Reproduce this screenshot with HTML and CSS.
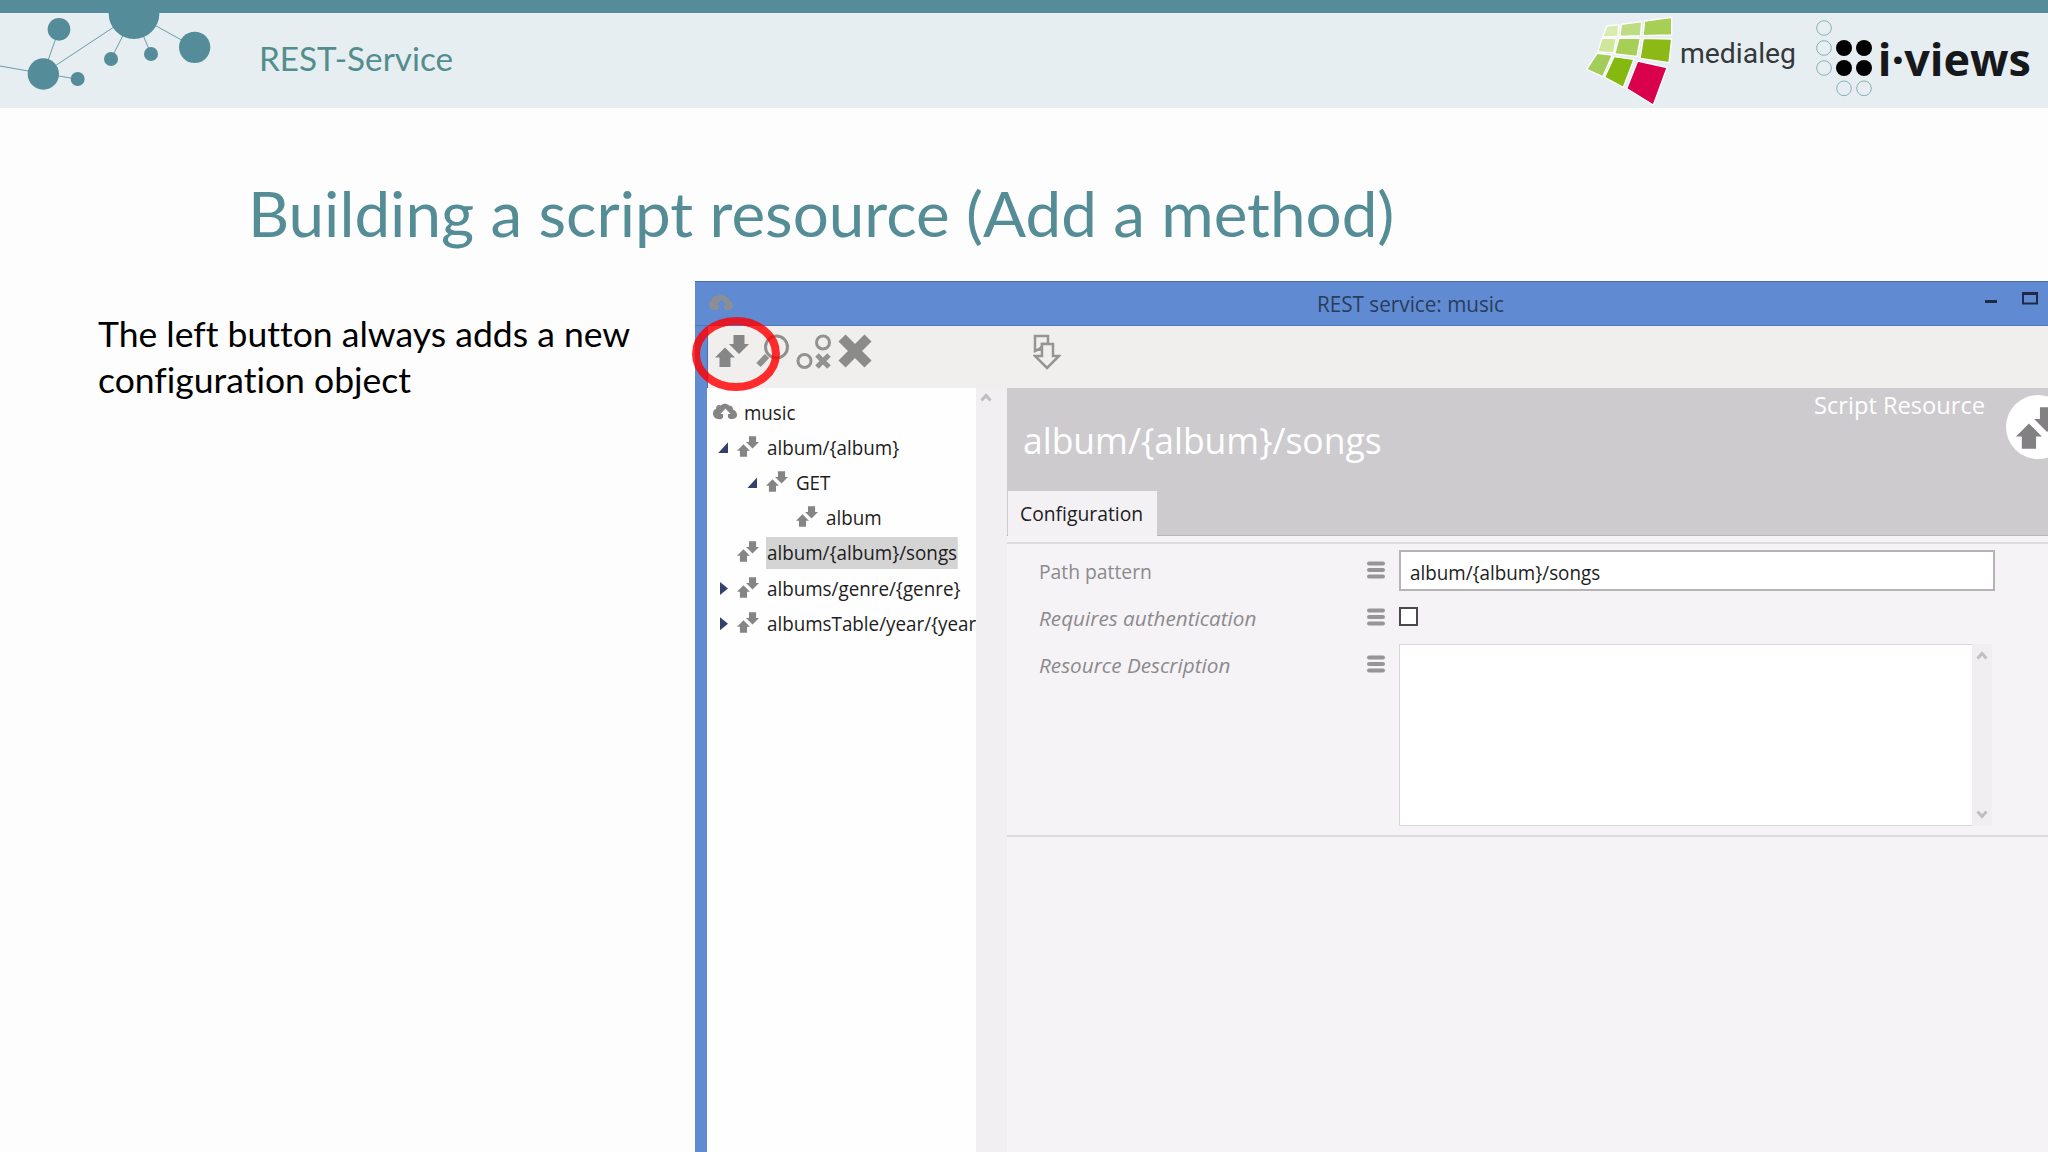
FILE: index.html
```html
<!DOCTYPE html>
<html lang="en">
<head>
    <meta charset="UTF-8">
    <title>REST-Service</title>
    <link rel="stylesheet" href="styles.css">
</head>
<body>
    <svg class="defs" width="0" height="0">
        <symbol id="arrows" viewBox="0 0 34 34">
            <path d="M18.500 1h11v9h4.500L24 20 14 10h4.500z M10 13.500L20 23.500h-4.500V33h-11v-9.500H0z"/>
        </symbol>
        <symbol id="cloud" viewBox="0 0 24 17">
            <path d="M8.500 16C3 17 0 14 0 10.500 0 8 1 6.500 3 6 3 2.500 5.500 1 8 2.500 9.500 0 14 0 16 2.500c2.500 0 4 1.500 4 4 3 1 4 3.500 4 5.500 0 3-3 4.500-7 4l-2-1.500V11h2.500L12.500 5.500 7.500 11H10v3.500z"/>
        </symbol>
        <symbol id="burger" viewBox="0 0 18 18">
            <path d="M2 2.500h14M2 9h14M2 15.500h14" stroke="#979598" stroke-width="4" stroke-linecap="round"/>
        </symbol>
        <symbol id="chevron" viewBox="0 0 12 10">
            <path d="M1.500 8.500L6 3.500l4.500 5" fill="none" stroke="#c0bec1" stroke-width="3"/>
        </symbol>
    </svg>

    <header class="header">
        <svg class="network" viewBox="0 39 660 285" fill="#548d99" stroke="#548d99">
            <path d="M0 198L130 221 232 237M130 221L177 88M130 221L402 41 333 177M402 41L453 162M402 41L584 142" fill="none" stroke-width="2.500"/>
            <g stroke="none">
                <circle cx="402" cy="41" r="76"/>
                <circle cx="177" cy="88" r="34"/>
                <circle cx="130" cy="222" r="47"/>
                <circle cx="233" cy="237" r="21"/>
                <circle cx="333" cy="177" r="21"/>
                <circle cx="453" cy="162" r="21"/>
                <circle cx="584" cy="142" r="47"/>
            </g>
        </svg>
        <span class="section"><span class="fit">REST-Service</span></span>
        <svg class="logos" viewBox="0 39 1464 285">
            <g stroke="#fff" stroke-width="4" stroke-linejoin="round">
                <path d="M140 78L176 74 174 109 128 111z" fill="#d9ecb0"/>
                <path d="M184 73L245 65 242 107 180 109z" fill="#bedc84"/>
                <path d="M254 63L335 52V105L249 107z" fill="#a8cf55"/>
                <path d="M126 115L169 114 161 158 113 156z" fill="#cfe69b"/>
                <path d="M177 114L241 115 231 169 164 162z" fill="#a8cf55"/>
                <path d="M250 115L335 117 327 188 240 175z" fill="#8cb915"/>
                <path d="M111 160L157 165 128 230 80 208z" fill="#a3cd58"/>
                <path d="M162 170L222 178 190 262 134 232z" fill="#85b90f"/>
                <path d="M233 183L321 203 280 315 200 266z" fill="#d9004c"/>
            </g>
            <text class="medialeg" x="360" y="190" textLength="348" lengthAdjust="spacingAndGlyphs">medialeg</text>
            <g fill="none" stroke="#5f9095" stroke-width="2">
                <circle cx="792" cy="84" r="22"/>
                <circle cx="792" cy="144" r="22"/>
                <circle cx="792" cy="204" r="22"/>
                <circle cx="852" cy="265" r="22"/>
                <circle cx="912" cy="265" r="22"/>
            </g>
            <circle cx="852" cy="144" r="24"/>
            <circle cx="912" cy="144" r="24"/>
            <circle cx="852" cy="204" r="24"/>
            <circle cx="912" cy="204" r="24"/>
            <text class="iviews" x="953" y="227" textLength="460" lengthAdjust="spacingAndGlyphs">i·views</text>
        </svg>
    </header>

    <h1 class="title"><span class="fit">Building a script resource (Add a method)</span></h1>

    <main class="content">
        <p class="note"><span class="fit">The left button always adds a new<br>configuration object</span></p>

        <section class="window">
            <div class="titlebar">
                <svg class="app-icon"><use href="#cloud"/></svg>
                <span class="caption"><span class="fit">REST service: music</span></span>
                <svg class="controls" viewBox="0 0 56 14">
                    <path d="M0 10.500h12" stroke="#1f2b45" stroke-width="3"/>
                    <path d="M38 2h14v10.500H38z M38 3h14" fill="none" stroke="#1f2b45" stroke-width="2"/>
                </svg>
            </div>

            <div class="toolbar">
                <svg class="tool" viewBox="0 0 34 34"><use href="#arrows"/></svg>
                <svg class="tool find" viewBox="0 0 34 34">
                    <circle cx="20.500" cy="13" r="11" fill="none" stroke="#8f8f8f" stroke-width="3"/>
                    <path d="M11 22L2.500 31" stroke="#8f8f8f" stroke-width="6"/>
                </svg>
                <svg class="tool relation" viewBox="0 0 36 36" fill="none" stroke="#929292">
                    <circle cx="27" cy="8.500" r="6.500" stroke-width="3"/>
                    <circle cx="8.500" cy="27" r="6.500" stroke-width="3"/>
                    <path d="M21 21L33 33M33 21L21 33" stroke-width="5"/>
                </svg>
                <svg class="tool remove" viewBox="0 0 34 34">
                    <path d="M4 4L30 30M30 4L4 30" stroke="#8b8b89" stroke-width="10"/>
                </svg>
                <svg class="tool transfer" viewBox="0 0 28 36" fill="#f0efee" stroke="#959595" stroke-width="2.500">
                    <path d="M2 2h13v8h-6v4L2 17z"/>
                    <path d="M9 10h11v12h6L14 34 2 22h7z"/>
                    <path d="M2 17l7-6v6z" fill="#959595" stroke="none"/>
                </svg>
                <svg class="marker" viewBox="0 0 88 76">
                    <ellipse cx="44" cy="38" rx="40" ry="33" fill="none" stroke="#f00" stroke-opacity=".82" stroke-width="8"/>
                </svg>
            </div>

            <div class="panes">
                <ul class="tree">
                    <li class="root"><svg class="cloud"><use href="#cloud"/></svg><span>music</span></li>
                    <li><i class="open"></i><svg><use href="#arrows"/></svg><span>album/{album}</span></li>
                    <li class="level-2"><i class="open"></i><svg><use href="#arrows"/></svg><span>GET</span></li>
                    <li class="level-3"><i></i><svg><use href="#arrows"/></svg><span>album</span></li>
                    <li class="selected"><i></i><svg><use href="#arrows"/></svg><span>album/{album}/songs</span></li>
                    <li><i class="closed"></i><svg><use href="#arrows"/></svg><span>albums/genre/{genre}</span></li>
                    <li><i class="closed"></i><svg><use href="#arrows"/></svg><span>albumsTable/year/{year}</span></li>
                </ul>
                <div class="gutter"><svg><use href="#chevron"/></svg></div>

                <div class="editor">
                    <div class="banner">
                        <h2><span class="fit">album/{album}/songs</span></h2>
                        <div class="kind"><span class="fit">Script Resource</span></div>
                        <div class="badge"><svg><use href="#arrows"/></svg></div>
                        <div class="tab"><span class="fit">Configuration</span></div>
                    </div>
                    <div class="form">
                        <div class="row">
                            <label><span class="fit">Path pattern</span></label>
                            <svg class="burger"><use href="#burger"/></svg>
                            <div class="input"><span class="fit">album/{album}/songs</span></div>
                        </div>
                        <div class="row">
                            <label class="optional"><span class="fit">Requires authentication</span></label>
                            <svg class="burger"><use href="#burger"/></svg>
                            <div class="checkbox"></div>
                        </div>
                        <div class="row">
                            <label class="optional"><span class="fit">Resource Description</span></label>
                            <svg class="burger"><use href="#burger"/></svg>
                            <div class="textarea"></div>
                            <div class="scroll">
                                <svg><use href="#chevron"/></svg>
                                <svg class="down"><use href="#chevron"/></svg>
                            </div>
                        </div>
                    </div>
                </div>
            </div>
        </section>
    </main>
</body>
</html>
```

FILE: styles.css
```css
* { box-sizing: border-box; }
body { margin: 0; height: 1152px; overflow: hidden; background: #fdfdfd; font-family: "Open Sans", "Noto Sans", sans-serif; font-size: 20px; }
svg { display: block; flex: none; }
.defs { position: absolute; }
.fit { display: inline-block; white-space: nowrap; transform-origin: 0 50%; }

.header { display: flex; height: 108px; border-top: 13px solid #548d99; background: #e6eef1; font-family: Lato, sans-serif; }
.network { width: 220px; height: 95px; }
.section { margin-left: 39px; color: #548d8e; font-size: 32px; line-height: 91px; }
.section .fit { transform: scaleX(1.04); }
.logos { width: 488px; height: 95px; margin-left: auto; }
.medialeg { font: 82px Roboto, sans-serif; fill: #33383b; }
.iviews { font: bold 136px "Open Sans", sans-serif; fill: #17181c; }

.title { height: 173px; margin: 0; padding-left: 248px; color: #548d95; font: 61px/211px Lato, sans-serif; font-variant-ligatures: none; }
.title .fit { transform: scaleX(1.045); }
.content { display: grid; grid-template-columns: 695px 1353px; height: 871px; }
.note { margin: 0; padding: 30px 0 0 98px; color: #000; font: 34px/46px Lato, sans-serif; font-variant-ligatures: none; }
.note .fit { transform: scaleX(1.045); }

.window { display: flex; flex-direction: column; border-left: 12px solid #608bd2; box-shadow: inset 1px 0 #4a70b0; background: #f0efee; }
.titlebar { display: flex; height: 45px; margin-left: -12px; border-top: 1px solid #466a9e; border-bottom: 1px solid #5078c0; background: #608bd2; line-height: 44px; color: #2a3c5c; }
.titlebar .fit { transform: scaleX(.985); }
.app-icon { width: 24px; height: 17px; margin: 12px 0 0 14px; fill: #8b8f93; }
.caption { margin-left: 584px; font-size: 21px; }
.controls { width: 56px; height: 14px; margin: 9px 7px 0 auto; }

.toolbar { position: relative; display: flex; height: 62px; padding: 8px 0 0 8px; fill: #868686; }
.tool { width: 34px; height: 34px; }
.find { margin-left: 7px; }
.relation { width: 36px; height: 36px; margin-left: 6px; }
.remove { margin-left: 6px; }
.transfer { width: 28px; height: 36px; margin-left: 161px; }
.marker { position: absolute; left: -15px; top: -10px; width: 88px; height: 76px; }

.panes { display: flex; flex: 1; }
.tree { width: 269px; margin: 0; padding: 7px 0 0 11px; overflow: hidden; list-style: none; background: #fefefe; color: #1d1d22; }
.tree li { display: flex; align-items: center; width: 400px; height: 35.2px; }
.tree .root { margin-left: -5px; }
.tree .level-2 { padding-left: 29px; }
.tree .level-3 { padding-left: 59px; }
.tree i { width: 10px; height: 11px; margin-right: 9px; }
.tree .open { background: #34416d; clip-path: polygon(100% 0, 100% 100%, 0 100%); }
.tree .closed { height: 13px; width: 8px; margin: 0 9px 0 2px; background: #34416d; clip-path: polygon(0 0, 100% 50%, 0 100%); }
.tree svg { width: 22px; height: 23px; margin-bottom: 3px; fill: #858585; }
.tree .cloud { width: 24px; height: 17px; }
.tree span { height: 32px; margin-left: 7px; padding: 0 1px; line-height: 32px; transform: scaleX(.94); transform-origin: 0 50%; }
.tree .root span { margin-left: 6px; }
.tree .selected span { background: #d4d4d4; }
.gutter { width: 31px; padding: 4px 0 0 4px; background: #f1eff2; }
.gutter svg, .scroll svg { width: 12px; height: 10px; }

.editor { flex: 1; background: #f5f3f6; }
.banner { display: grid; grid-template: 103px 44px / 1fr auto 63px; height: 148px; margin-right: -23px; border-bottom: 1px solid #b9b7ba; background: #cdcbce; color: #fff; }
.banner .fit { transform: scaleX(.985); }
.banner h2 { margin: 0; padding-left: 16px; font-size: 36px; font-weight: normal; line-height: 105px; }
.kind { margin-right: 20px; font-size: 24px; line-height: 34px; }
.badge { width: 64px; height: 64px; margin: 7px 0 0 -2px; padding: 11px 0 0 8px; border-radius: 50%; background: #fff; fill: #828083; }
.badge svg { width: 48px; height: 44px; }
.tab { grid-column: 1; width: 149px; height: 45px; margin-left: 1px; padding-left: 12px; background: #f3f1f4; color: #1d1d22; line-height: 46px; }
.banner .tab .fit { transform: scaleX(.965); }

.form { height: 295px; margin-top: 6px; padding-top: 6px; border-top: 2px solid #dddbde; border-bottom: 2px solid #dddbde; }
.row { display: flex; height: 47px; padding-left: 32px; }
.row label { width: 328px; height: 44px; color: #8c8a8d; line-height: 44px; }
.row .fit { transform: scaleX(.965); }
.row .optional .fit { font-style: italic; transform: scaleX(1.035); }
.burger { width: 18px; height: 18px; margin: 11px 14px 0 0; }
.input { width: 596px; height: 41px; padding-left: 9px; border: 2px solid #b5b3b6; background: #fff; color: #1d1d22; line-height: 41px; }
.input .fit { transform: scaleX(.94); }
.checkbox { width: 19px; height: 19px; margin-top: 10px; border: 2px solid #4a484b; background: #fff; }
.textarea { width: 573px; height: 182px; border: 1px solid #d8d6d9; border-right: 0; background: #fff; }
.scroll { display: flex; flex-direction: column; justify-content: space-between; width: 20px; height: 182px; padding: 6px 4px; background: #f0eef1; }
.down { transform: scaleY(-1); }
```
